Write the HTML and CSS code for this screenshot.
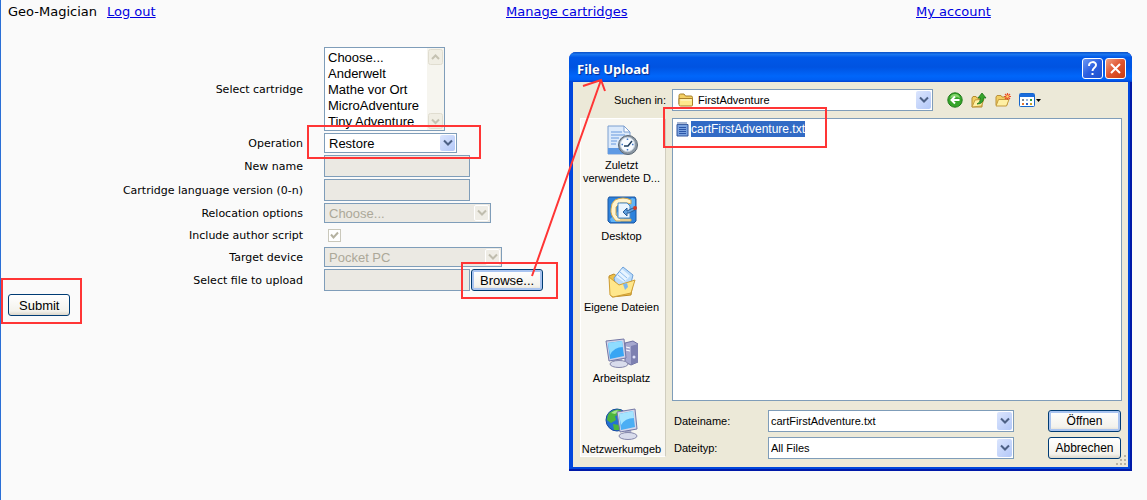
FILE: index.html
```html
<!DOCTYPE html>
<html lang="en">
<head>
    <meta charset="UTF-8">
    <meta name="viewport" content="width=device-width, initial-scale=1.0">
    <title>Geo-Magician</title>
    <link rel="stylesheet" href="styles.css">
</head>
<body>
    <header class="top-nav">
        <div class="account">
            <span>Geo-Magician</span>
            <a href="#">Log out</a>
        </div>
        <div><a href="#">Manage cartridges</a></div>
        <div><a href="#">My account</a></div>
    </header>

    <form class="cartridge-form">
        <div class="form-grid">
            <label for="cartridge">Select cartridge</label>
            <div class="combo listbox">
                <select id="cartridge" size="5">
                    <option>Choose...</option>
                    <option>Anderwelt</option>
                    <option>Mathe vor Ort</option>
                    <option>MicroAdventure</option>
                    <option>Tiny Adventure</option>
                </select>
                <span class="scrollbar">
                    <svg width="15" height="16" viewBox="0 0 15 16"><rect x="0.5" y="0.5" width="14" height="15" rx="2"/><path d="M4 10l3.5-3.5L11 10"/></svg>
                    <svg width="15" height="16" viewBox="0 0 15 16"><rect x="0.5" y="0.5" width="14" height="15" rx="2"/><path d="M4 6.5l3.5 3.5L11 6.5"/></svg>
                </span>
            </div>

            <label for="operation">Operation</label>
            <div class="combo operation">
                <select id="operation"><option>Restore</option></select>
                <span class="drop"><svg width="10" height="8" viewBox="0 0 10 8"><path d="M1 1.5l4 4 4-4"/></svg></span>
            </div>

            <label for="new-name">New name</label>
            <div><input class="text-box" id="new-name" type="text" disabled></div>

            <label for="lang-version">Cartridge language version (0-n)</label>
            <div><input class="text-box" id="lang-version" type="text" disabled></div>

            <label for="relocation">Relocation options</label>
            <div class="combo relocation disabled">
                <select id="relocation" disabled><option>Choose...</option></select>
                <span class="drop"><svg width="10" height="8" viewBox="0 0 10 8"><path d="M1 1.5l4 4 4-4"/></svg></span>
            </div>

            <label for="author-script">Include author script</label>
            <div class="check">
                <input id="author-script" type="checkbox" checked disabled>
                <svg width="13" height="13" viewBox="0 0 13 13"><path d="M3 5.5l2.5 3L10 3.500"/></svg>
            </div>

            <label for="device">Target device</label>
            <div class="combo device disabled">
                <select id="device" disabled><option>Pocket PC</option></select>
                <span class="drop"><svg width="10" height="8" viewBox="0 0 10 8"><path d="M1 1.5l4 4 4-4"/></svg></span>
            </div>

            <label for="upload">Select file to upload</label>
            <div class="upload">
                <input class="text-box" id="upload" type="text" disabled>
                <button class="btn focused" type="button">Browse...</button>
            </div>
        </div>
        <button class="btn" type="submit">Submit</button>
    </form>

    <section class="dialog">
        <div class="title-bar">
            <h1>File Upload</h1>
            <button class="title-btn help" type="button" aria-label="Help">
                <svg width="19" height="19" viewBox="0 0 19 19"><path d="M6 7c0-5 7-5 7-1 0 3-3.5 2.5-3.5 6"/><path d="M9.5 14v2"/></svg>
            </button>
            <button class="title-btn close" type="button" aria-label="Close">
                <svg width="19" height="19" viewBox="0 0 19 19"><path d="M5 5l9 9M14 5l-9 9"/></svg>
            </button>
        </div>

        <div class="dialog-body">
            <label class="look-label" for="look-in">Suchen in:</label>
            <div class="look-row">
                <div class="combo look-in">
                    <svg class="folder" width="16" height="14" viewBox="0 0 16 14">
                        <path d="M1 11V2.5Q1 1 2.500 1H6l1.500 2H13q1.500 0 1.500 1.500V6" fill="#f3cf63" stroke="#a8802a"/>
                        <path d="M1 11.500V5.500h13.500V12q0 1-1 1H2.500Q1 13 1 11.500z" fill="#ffe98c" stroke="#a8802a"/>
                        <path d="M2.500 7h11" stroke="#fffbd8" fill="none"/>
                    </svg>
                    <select id="look-in"><option>FirstAdventure</option></select>
                    <span class="drop"><svg width="10" height="8" viewBox="0 0 10 8"><path d="M1 1.5l4 4 4-4"/></svg></span>
                </div>
                <div class="tools">
                    <button type="button" aria-label="Back">
                        <svg width="16" height="16" viewBox="0 0 16 16">
                            <circle cx="8" cy="8" r="7.200" fill="#35a52a" stroke="#217a1b"/>
                            <path d="M3 6q1-4 5-4t5 4q-5-2-10 0z" fill="#85d56e"/>
                            <path d="M12.500 8H5M8 4.500L4.500 8 8 11.500" fill="none" stroke="#fff" stroke-width="2"/>
                        </svg>
                    </button>
                    <button type="button" aria-label="Up one level">
                        <svg width="16" height="16" viewBox="0 0 16 16">
                            <path d="M1 15V6l1-1.500h3L6 6h5v9z" fill="#f2cf62" stroke="#b48b2e"/>
                            <path d="M1 15l3-7 9-1-2.500 7z" fill="#fff0a4" stroke="#c39a3c"/>
                            <path d="M6 12q3.500-1 3.500-6H7l4-5 4 5h-2.500q0 6-6.500 6z" fill="#36a52b" stroke="#1d7418" stroke-width="0.800"/>
                        </svg>
                    </button>
                    <button type="button" aria-label="New folder">
                        <svg width="16" height="16" viewBox="0 0 16 16">
                            <path d="M1 13V5l1-1.500h4L7 5h5v8z" fill="#f2cf62" stroke="#b9913a"/>
                            <path d="M1 14l2.500-6.500H14L11.500 14z" fill="#fff0a4" stroke="#c39a3c"/>
                            <path d="M12.500 1v7M9 4.500h7M10 2l5 5M15 2l-5 5" stroke="#e8502a" stroke-width="1.200"/>
                            <circle cx="12.500" cy="4.500" r="1.300" fill="#ffd36a"/>
                        </svg>
                    </button>
                    <button type="button" aria-label="Views">
                        <svg width="23" height="16" viewBox="0 0 23 16">
                            <rect x="0.500" y="1.500" width="15" height="13" rx="1" fill="#fff" stroke="#1666cc"/>
                            <path d="M1 2h14v3H1z" fill="#1a6cdc"/>
                            <path d="M3 7h2v2H3z" fill="#7b8794"/>
                            <path d="M7 7h2v2H7z" fill="#9bb5d6"/>
                            <path d="M11 7h2v2h-2z" fill="#2f9c3c"/>
                            <path d="M3 11h2v2H3z" fill="#e6762e"/>
                            <path d="M7 11h2v2H7z" fill="#2b5fc4"/>
                            <path d="M11 11h2v2h-2z" fill="#c9a02c"/>
                            <path d="M17 7h5l-2.500 3z" fill="#000"/>
                        </svg>
                    </button>
                </div>
            </div>

            <nav class="places">
                <button type="button">
                    <svg width="32" height="32" viewBox="0 0 32 32">
                        <path d="M2 2h16l6 6v22H2z" fill="#dceafb" stroke="#7c9fd0"/>
                        <path d="M18 2v6h6z" fill="#fff" stroke="#7c9fd0"/>
                        <path d="M5 8h11M5 11h14M5 14h8M5 17h6M5 20h5" stroke="#8db4e8" stroke-width="1.500"/>
                        <path d="M2 24h22v6H2z" fill="#5f9ae4"/>
                        <circle cx="22" cy="21" r="9.500" fill="#8c98a4" stroke="#5c6874"/>
                        <circle cx="21.500" cy="20.500" r="7.200" fill="#f8fbff" stroke="#c7d2dc"/>
                        <path d="M21.500 14.500v1.500M21.500 25v1.500M15.500 20.500H17M26 20.500h1.500" stroke="#3c78c8" stroke-width="1.500"/>
                        <path d="M18 22h4l4-5" fill="none" stroke="#1e3e5e" stroke-width="1.500"/>
                    </svg>
                    <span>Zuletzt verwendete D...</span>
                </button>
                <button type="button">
                    <svg width="32" height="32" viewBox="0 0 32 32">
                        <path d="M3 2h26l1 2v22l-2 2H4l-2-2V4z" fill="#2d82dc" stroke="#1b559f"/>
                        <path d="M4 24L26 3l3 1v10L14 27H5z" fill="#62b4f5"/>
                        <path d="M9 5q8-4 16 0v4l-4-1h-7l-4 4v8l4 4h11v2H10q-6-6-5-12 0-6 4-9z" fill="#fff3cd" stroke="#d1a64c"/>
                        <path d="M12 8h9l3 3v12H12z" fill="#e9f5ff" stroke="#4a8ac6"/>
                        <path d="M17 17l4-4v3l6-3 2 2-6 3h-2v3z" fill="#5fa0df" stroke="#275d99"/>
                        <circle cx="29" cy="13" r="2" fill="#cf3a25"/>
                    </svg>
                    <span>Desktop</span>
                </button>
                <button type="button">
                    <svg width="32" height="32" viewBox="0 0 32 32">
                        <path d="M3 10l5-2 4 3 15 5-2 13-19 2z" fill="#eec04a" stroke="#bd8c25"/>
                        <path d="M8 12L17 1l10 8-3 12-13 4z" fill="#bcdcfa" stroke="#6b9fd9"/>
                        <path d="M16 3l8 7-6 6-8-5z" fill="#e7f4ff"/>
                        <path d="M14 6l7 6M12 9l7 6" stroke="#8cbcef"/>
                        <path d="M3 11l10 8 16-5-4 13-18 4-3-2z" fill="#ffe78b" stroke="#cf9e35"/>
                        <path d="M17 18l4-1 1 4-3 3z" fill="#7cb6ec"/>
                    </svg>
                    <span>Eigene Dateien</span>
                </button>
                <button type="button">
                    <svg width="33" height="32" viewBox="0 0 33 32">
                        <path d="M20 6l8-2 5 3v18l-7 3-6-3z" fill="#a6a8cf" stroke="#6d6fa0"/>
                        <path d="M26 9l7-2v18l-7 3z" fill="#7d80b1"/>
                        <path d="M21 10l4 1M21 13l4 1" stroke="#fff"/>
                        <circle cx="29" cy="20" r="1.500" fill="#dfe1fa"/>
                        <path d="M9 20l8 1 1 5H8z" fill="#b5b7cf"/>
                        <ellipse cx="14" cy="27" rx="9" ry="3.500" fill="#d9dcec" stroke="#8587ab"/>
                        <path d="M1 4l18-2 2 19-17 3z" fill="#cfd2e8" stroke="#7478a6"/>
                        <path d="M3 6l14-2 2 15-14 3z" fill="#38a5f3"/>
                        <path d="M3 6l14-2 1 6Q9 10 5 18z" fill="#8fdcff"/>
                    </svg>
                    <span>Arbeitsplatz</span>
                </button>
                <button type="button">
                    <svg width="33" height="32" viewBox="0 0 33 32">
                        <circle cx="12" cy="12" r="11" fill="#2470d3" stroke="#174b9c"/>
                        <path d="M4 5q6-5 12-3l-2 5-4 1 1 4-5 3-4-3q0-4 2-7zM8 16l6 1v5l-5 0z" fill="#4db53d"/>
                        <path d="M6 5q5-4 8-2l-4 3z" fill="#a4e58c"/>
                        <path d="M20 22l6 0 1 5h-8z" fill="#a8abc8"/>
                        <ellipse cx="23" cy="28" rx="9" ry="3.500" fill="#d9dcec" stroke="#8587ab"/>
                        <path d="M12 4l18-3 2 20-17 3z" fill="#d4d7eb" stroke="#7478a6"/>
                        <path d="M14 6l14-3 2 16-14 3z" fill="#4baef4"/>
                        <path d="M14 6l14-3 1 7q-9 0-13 7z" fill="#a5e5ff"/>
                    </svg>
                    <span>Netzwerkumgeb</span>
                </button>
            </nav>

            <div class="main-pane">
                <ul class="file-list">
                    <li>
                        <svg width="13" height="15" viewBox="0 0 13 15">
                            <path d="M1 2.500h11V14H1z" fill="#7aa2df" stroke="#31559c"/>
                            <path d="M2 0v3M4 0v3M6 0v3M8 0v3M10 0v3" stroke="#4e6fa9"/>
                            <path d="M3 5.500h7M3 7.500h7M3 9.500h7M3 11.500h7" stroke="#2b55a8"/>
                        </svg>
                        <span>cartFirstAdventure.txt</span>
                    </li>
                </ul>
                <div class="file-fields">
                    <label for="file-name">Dateiname:</label>
                    <div class="combo">
                        <input id="file-name" type="text" value="cartFirstAdventure.txt">
                        <span class="drop"><svg width="10" height="8" viewBox="0 0 10 8"><path d="M1 1.5l4 4 4-4"/></svg></span>
                    </div>
                    <button class="btn focused" type="button">Öffnen</button>

                    <label for="file-type">Dateityp:</label>
                    <div class="combo">
                        <select id="file-type"><option>All Files</option></select>
                        <span class="drop"><svg width="10" height="8" viewBox="0 0 10 8"><path d="M1 1.5l4 4 4-4"/></svg></span>
                    </div>
                    <button class="btn" type="button">Abbrechen</button>
                </div>
            </div>
        </div>
        <svg class="grip" width="12" height="12" viewBox="0 0 12 12">
            <path d="M9 1h2v2H9zM5 5h2v2H5zM9 5h2v2H9zM1 9h2v2H1zM5 9h2v2H5zM9 9h2v2H9z" fill="#b8b4a3"/>
        </svg>
    </section>

    <!-- tutorial marks: highlighted controls and the arrow to the dialog -->
    <svg class="marks" width="840" height="340" viewBox="0 0 840 340">
        <rect x="308" y="126" width="172" height="32"/>
        <rect x="462" y="263" width="95" height="35"/>
        <rect x="2" y="279" width="79" height="44"/>
        <rect x="664" y="108" width="162" height="39"/>
        <path d="M532 276L601 80M583 86l18-6 4 11"/>
    </svg>
</body>
</html>
```

FILE: styles.css
```css
* {
    box-sizing: border-box;
}

body {
    margin: 0;
    min-height: 100vh;
    border-left: 1px solid #2a6fd6;
    background: #fafafa;
    color: #000;
    font-family: Verdana, "DejaVu Sans", sans-serif;
    font-size: 13px;
}

button,
input,
select {
    margin: 0;
    font-family: Arial, "Liberation Sans", sans-serif;
    color: #000;
}

/* Header links */
.top-nav {
    display: grid;
    grid-template-columns: 498fr 410fr 231fr;
    padding: 4px 0 0 7px;
    line-height: 16px;
}

.account {
    display: flex;
    gap: 10px;
}

.top-nav a {
    color: #0000e0;
}

/* Cartridge form */
.cartridge-form {
    padding: 27px 0 0 7px;
}

.form-grid {
    display: grid;
    grid-template-columns: 295px 1fr;
    grid-auto-rows: minmax(20px, auto);
    gap: 2px 21px;
    align-items: center;
    margin-bottom: 3px;
    font-size: 11px;
}

.form-grid > label {
    text-align: right;
}

.form-grid > div {
    justify-self: start;
    display: flex;
}

.text-box {
    width: 146px;
    height: 22px;
    border: 1px solid #7f9db9;
    background: #ebe9e3;
}

.combo {
    position: relative;
    display: flex;
}

.combo select,
.combo input {
    appearance: none;
    width: 100%;
    height: 20px;
    padding: 0 20px 0 4px;
    border: 1px solid #7f9db9;
    border-radius: 0;
    background: #fff;
    font-size: 13px;
    outline: none;
}

.drop {
    position: absolute;
    top: 2px;
    right: 2px;
    bottom: 2px;
    width: 15px;
    display: flex;
    align-items: center;
    justify-content: center;
    border-radius: 2px;
    background: linear-gradient(135deg, #dbe5fd, #b3c8f8);
    pointer-events: none;
}

.drop path {
    fill: none;
    stroke: #4d6185;
    stroke-width: 2;
}

.combo.disabled select {
    background: #ebe9e3;
    color: #aca899;
    opacity: 1;
}

.disabled .drop {
    border: 1px solid #fff;
    background: #efede6;
}

.disabled .drop path {
    stroke: #c0bdae;
}

.operation {
    width: 133px;
}

.relocation {
    width: 167px;
}

.device {
    width: 178px;
}

.listbox {
    width: 121px;
}

.combo.listbox select {
    height: 84px;
    padding: 2px 0 0;
    overflow: hidden;
}

.listbox option {
    height: 16px;
    min-height: 16px;
    padding: 0 3px;
    line-height: 16px;
}

.scrollbar {
    position: absolute;
    top: 1px;
    right: 1px;
    bottom: 1px;
    width: 17px;
    padding: 1px;
    display: flex;
    flex-direction: column;
    justify-content: space-between;
    background: #f6f5ef;
}

.scrollbar rect {
    fill: #f0eee4;
    stroke: #e0ddd0;
}

.scrollbar path {
    fill: none;
    stroke: #c5c2b2;
    stroke-width: 2;
}

.check {
    position: relative;
    margin-left: 4px;
}

.check input {
    appearance: none;
    width: 13px;
    height: 13px;
    border: 1px solid #cac8bb;
    background: #fff;
}

.check svg {
    position: absolute;
    inset: 0;
    fill: none;
    stroke: #b5b2a1;
    stroke-width: 2;
}

.upload {
    gap: 1px;
}

.btn {
    height: 22px;
    padding: 0 10px;
    border: 1px solid #003c74;
    border-radius: 3px;
    background: linear-gradient(#fff, #f3f2ec 80%, #dcd7cb);
    font-size: 13px;
}

.upload .btn {
    padding: 0 8px;
}

.btn.focused {
    box-shadow: inset 0 0 0 2px #a9c4f0;
}

/* File dialog window */
.dialog {
    position: absolute;
    top: 52px;
    left: 569px;
    width: 563px;
    padding: 0 4px 4px;
    border-radius: 7px 7px 0 0;
    background: #0046dc;
    box-shadow: inset -1px -1px 0 1px #0019a8;
    font-family: Arial, "Liberation Sans", sans-serif;
    font-size: 11px;
}

.title-bar {
    display: flex;
    align-items: center;
    gap: 2px;
    height: 30px;
    margin: 0 -4px;
    padding: 3px 6px 0 8px;
    border-radius: 7px 7px 0 0;
    background: linear-gradient(#0a4fc4, #1a76f0 8%, #0058e8 18%, #0053e1 50%, #0066fa 80%, #0060f4 92%, #0040d0);
}

.title-bar h1 {
    flex: 1;
    margin: 0;
    color: #fff;
    font-family: "Trebuchet MS", "Open Sans", sans-serif;
    font-size: 13px;
    font-weight: bold;
    text-shadow: 1px 1px 1px #0a2a8c;
}

.title-btn {
    width: 21px;
    height: 21px;
    padding: 0;
    border: 1px solid #fff;
    border-radius: 3px;
}

.title-btn svg {
    display: block;
    fill: none;
    stroke: #fff;
    stroke-width: 2;
}

.help {
    background: linear-gradient(135deg, #6c98f3, #2c5fe0 50%, #1f50cc);
}

.close {
    background: linear-gradient(135deg, #f0a084, #e0532d 50%, #c93c12);
}

.dialog-body {
    display: grid;
    grid-template-columns: 86px 1fr;
    gap: 7px 6px;
    padding: 7px 6px 8px 7px;
    background: #ece9d8;
}

.look-label {
    align-self: center;
    text-align: right;
}

.look-row {
    display: flex;
    align-items: center;
    gap: 14px;
}

.look-in {
    width: 261px;
}

.dialog .combo select,
.dialog .combo input {
    height: 22px;
    padding-left: 2px;
    font-size: 11px;
}

.dialog .look-in select {
    padding-left: 25px;
}

.folder {
    position: absolute;
    top: 4px;
    left: 6px;
}

.tools {
    display: flex;
    gap: 8px;
}

.tools button {
    padding: 0;
    border: 0;
    background: none;
}

.tools svg {
    display: block;
}

.places {
    align-self: start;
    display: flex;
    flex-direction: column;
    padding: 5px 3px 0 0;
    border: 1px solid #fff;
    border-right-color: #d0cdbf;
    background: #f8f7f2;
}

.places button {
    display: flex;
    flex-direction: column;
    align-items: center;
    gap: 3px;
    height: 71px;
    padding: 0;
    border: 0;
    background: none;
    font-size: 11px;
    line-height: 13px;
}

.places button:last-child {
    height: auto;
}

.places svg {
    flex: none;
}

.file-list {
    height: 283px;
    margin: 0 0 9px;
    padding: 2px 3px;
    border: 1px solid #7f9db9;
    background: #fff;
    list-style: none;
    font-size: 12px;
}

.file-list li {
    display: flex;
    align-items: center;
    gap: 2px;
}

.file-list span {
    background: #316ac5;
    color: #fff;
    line-height: 16px;
}

.file-fields {
    display: grid;
    grid-template-columns: 94px 246px 73px;
    gap: 5px 0;
    align-items: center;
    padding-left: 2px;
}

.file-fields label {
    margin-right: auto;
}

.file-fields .btn {
    width: 73px;
    margin-left: 34px;
    padding: 0;
    font-size: 12px;
}

.grip {
    position: absolute;
    right: 5px;
    bottom: 5px;
}

.marks {
    position: absolute;
    top: 0;
    left: 0;
    fill: none;
    stroke: #ff3535;
    stroke-width: 2;
    pointer-events: none;
}
```
